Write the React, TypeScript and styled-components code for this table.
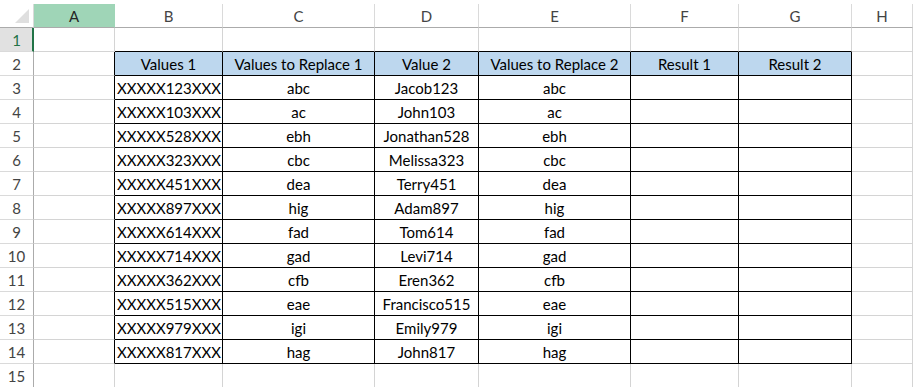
import React from 'react'
import styled, { createGlobalStyle } from 'styled-components'

const GlobalStyle = createGlobalStyle`
  html, body {
    margin: 0;
    padding: 0;
    background: #ffffff;
  }
  * {
    box-sizing: border-box;
  }
`

const GRID = '#d4d4d4'
const INK = '#000000'

const Sheet = styled.div`
  width: 913px;
  height: 387px;
  overflow: hidden;
  padding-top: 4px;
  display: grid;
  grid-template-columns: 34px 81px 108px 152px 104px 152px 108px 113px 1fr;
  grid-auto-rows: 24px;
  font-family: 'Lato', 'Liberation Sans', sans-serif;
  font-size: 15px;
  color: #000;
  background: #fff;
`

const Corner = styled.div`
  position: relative;
  border-right: 1px solid #dadada;
  border-bottom: 1px solid #ababab;
  background: #fff;

  &::after {
    content: '';
    position: absolute;
    right: 4px;
    bottom: 4px;
    width: 0;
    height: 0;
    border-left: 14px solid transparent;
    border-bottom: 14px solid #dfdfdf;
  }
`

const ColHead = styled.div<{ $active?: boolean }>`
  display: flex;
  align-items: center;
  justify-content: center;
  border-right: 1px solid ${p => (p.$active ? '#9fd5b7' : '#dadada')};
  border-bottom: 1px solid #ababab;
  background: ${p => (p.$active ? '#9fd5b7' : '#fff')};
  color: ${p => (p.$active ? '#262626' : '#444')};
`

const RowHead = styled.div<{ $active?: boolean }>`
  display: flex;
  align-items: center;
  justify-content: center;
  border-right: ${p => (p.$active ? '2px solid #217346' : '1px solid #ababab')};
  border-bottom: 1px solid #dadada;
  background: ${p => (p.$active ? '#e1e1e1' : '#fff')};
  color: ${p => (p.$active ? '#217346' : '#444')};
  padding-left: ${p => (p.$active ? '1px' : '0')};
`

const Cell = styled.div<{
  $right?: string
  $bottom?: string
  $bg?: string
  $align?: 'left' | 'center'
}>`
  display: flex;
  align-items: center;
  justify-content: ${p => (p.$align === 'left' ? 'flex-start' : 'center')};
  padding: 0 2px;
  white-space: nowrap;
  overflow: hidden;
  border-right: 1px solid ${p => p.$right || GRID};
  border-bottom: 1px solid ${p => p.$bottom || GRID};
  background: ${p => p.$bg || 'transparent'};
`

const columns = ['A', 'B', 'C', 'D', 'E', 'F', 'G', 'H']

const headers = [
  'Values 1',
  'Values to Replace 1',
  'Value 2',
  'Values to Replace 2',
  'Result 1',
  'Result 2',
]

const values1 = [
  'XXXXX123XXX', 'XXXXX103XXX', 'XXXXX528XXX', 'XXXXX323XXX',
  'XXXXX451XXX', 'XXXXX897XXX', 'XXXXX614XXX', 'XXXXX714XXX',
  'XXXXX362XXX', 'XXXXX515XXX', 'XXXXX979XXX', 'XXXXX817XXX',
]
const replace = ['abc', 'ac', 'ebh', 'cbc', 'dea', 'hig', 'fad', 'gad', 'cfb', 'eae', 'igi', 'hag']
const values2 = [
  'Jacob123', 'John103', 'Jonathan528', 'Melissa323', 'Terry451', 'Adam897',
  'Tom614', 'Levi714', 'Eren362', 'Francisco515', 'Emily979', 'John817',
]

// value of a cell, 0-based column index (A = 0) and 1-based row
const cellValue = (col: number, row: number): string => {
  if (row === 2 && col >= 1 && col <= 6) return headers[col - 1]
  const i = row - 3
  if (i < 0 || i >= values1.length) return ''
  if (col === 1) return values1[i]
  if (col === 2 || col === 4) return replace[i]
  if (col === 3) return values2[i]
  return ''
}

const inTable = (col: number, row: number) => col >= 1 && col <= 6 && row >= 2 && row <= 14

const App = () => {
  const rows = Array.from({ length: 15 }, (_, i) => i + 1)
  return (
    <>
      <GlobalStyle />
      <Sheet>
        <Corner />
        {columns.map((c, i) => (
          <ColHead key={c} $active={i === 0}>
            {c}
          </ColHead>
        ))}
        {rows.map(r => (
          <React.Fragment key={r}>
            <RowHead $active={r === 1}>{r}</RowHead>
            {columns.map((c, col) => {
              const table = inTable(col, r)
              const right =
                table || (col === 0 && r >= 2 && r <= 14) ? INK : undefined
              const bottom =
                table || (r === 1 && col >= 1 && col <= 6) ? INK : undefined
              return (
                <Cell
                  key={c}
                  $right={right}
                  $bottom={bottom}
                  $bg={r === 2 && table ? '#bdd7ee' : undefined}
                  $align={col === 1 && r > 2 ? 'left' : 'center'}
                >
                  {cellValue(col, r)}
                </Cell>
              )
            })}
          </React.Fragment>
        ))}
      </Sheet>
    </>
  )
}

export default App
